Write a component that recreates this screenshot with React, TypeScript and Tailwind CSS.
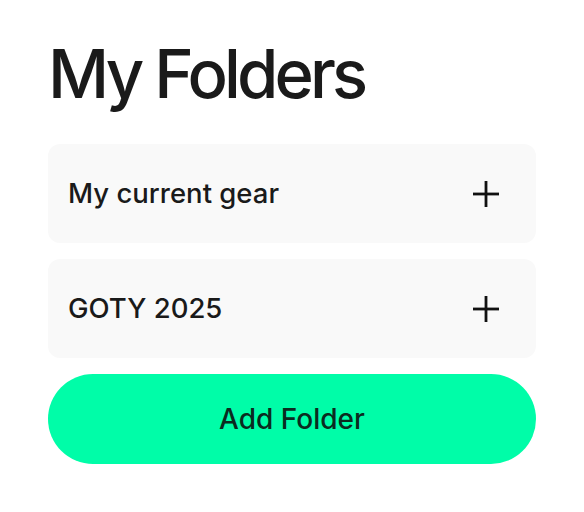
import React from "react";

function Plus() {
  return (
    <svg width="28" height="28" viewBox="0 0 28 28" fill="none" stroke="#111111" strokeWidth="2.8" strokeLinecap="butt">
      <line x1="1" y1="14" x2="27" y2="14" />
      <line x1="14" y1="1" x2="14" y2="27" />
    </svg>
  );
}

function Row({ label }: { label: string }) {
  return (
    <div className="flex h-[99px] items-center justify-between rounded-[12px] bg-[#f9f9f9] pl-5 pr-[36px]">
      <span className="text-[27.5px] font-medium tracking-[0px] text-[#1a1a1a]">{label}</span>
      <Plus />
    </div>
  );
}

export default function App() {
  return (
    <div
      className="min-h-[512px] w-[584px] bg-white px-12 pt-[34px]"
      style={{ fontFamily: "Inter, 'Noto Sans', sans-serif" }}
    >
      <h1 className="mb-[30px] text-[67px] font-medium leading-[80px] tracking-[-3.9px] text-[#1a1a1a]">My Folders</h1>
      <div className="flex flex-col gap-4">
        <Row label="My current gear" />
        <Row label="GOTY 2025" />
        <button className="flex h-[90px] items-center justify-center rounded-full bg-[#00fda8] text-[28px] font-medium tracking-[0px] text-[#0b2b20]">
          Add Folder
        </button>
      </div>
    </div>
  );
}
